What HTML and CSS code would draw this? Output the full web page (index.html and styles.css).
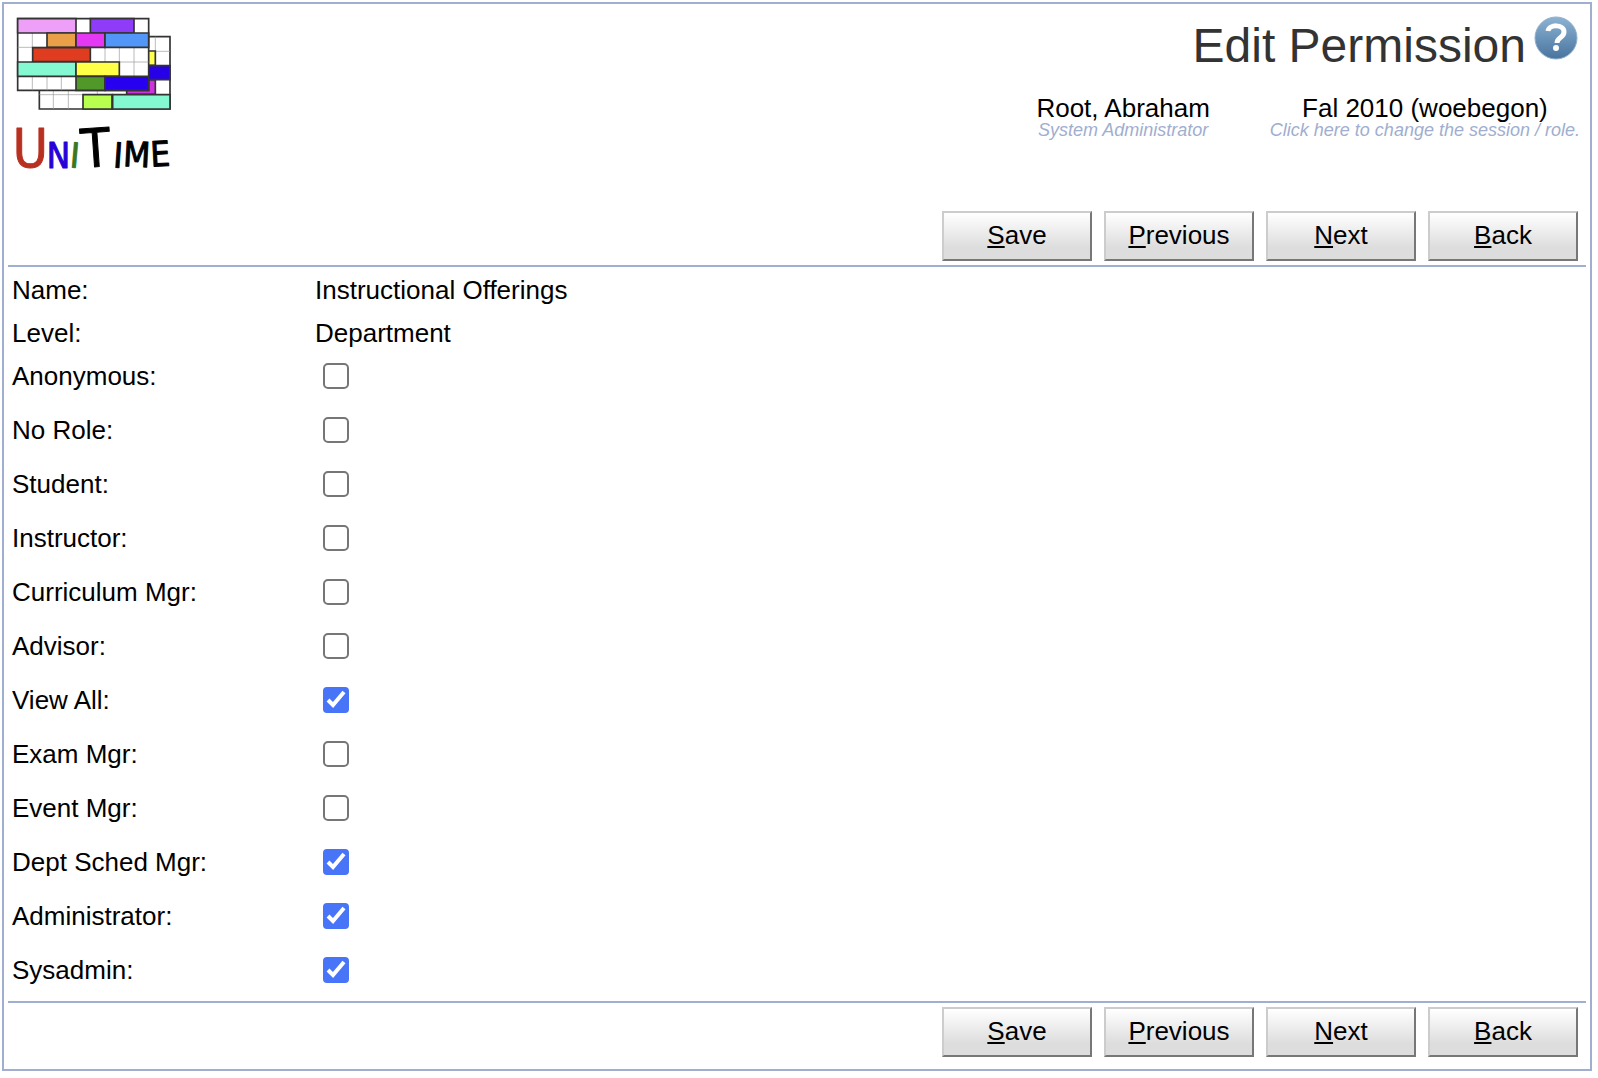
FILE: index.html
```html
<!DOCTYPE html>
<html lang="en">
<head>
<meta charset="utf-8">
<title>Edit Permission</title>
<link rel="stylesheet" href="styles.css">
</head>
<body>
<form class="page">
  <header class="header">
    <a class="logo" href="#" aria-label="UniTime">
      <svg class="logo-image" viewBox="45 45 474 474">
        <g stroke="#333" stroke-width="5">
          <path fill="#fff" d="M118 110H510V327H118z"/>
          <path fill="none" stroke="#999" stroke-width="2" d="M160 272v55M205 272v55M466 110v175M447 154h63M118 284h392M292 272v12"/>
          <path fill="#ffff50" d="M440 153h26v43h-26z"/>
          <path fill="#2800e8" d="M440 197h70v42h-70z"/>
          <path fill="#d030e0" d="M380 240h86v43h-86z"/>
          <path fill="#b8ff50" d="M249 284h87v43h-87z"/>
          <path fill="#84f8d0" d="M338 284h172v43H338z"/>
          <path fill="#fff" d="M53 56h393v215H53z"/>
          <path fill="none" stroke="#999" stroke-width="2" d="M97 99v44M53 142h393M315 142v87M358 142v87M402 142v87M271 186h175M97 229v42M141 229v42M184 229v42"/>
          <path fill="#eea0f8" d="M53 56h175v43H53z"/>
          <path fill="#8e3cf8" d="M271 56h131v43H271z"/>
          <path fill="#eaa048" d="M141 99h87v43h-87z"/>
          <path fill="#e438f4" d="M228 99h87v43h-87z"/>
          <path fill="#5296f8" d="M315 99h131v43H315z"/>
          <path fill="#e03c20" d="M98 143h173v42H98z"/>
          <path fill="#84f8d0" d="M53 186h175v43H53z"/>
          <path fill="#ffff48" d="M228 186h130v43H228z"/>
          <path fill="#509828" d="M228 229h87v42h-87z"/>
          <path fill="#2800f0" d="M315 229h131v42H315z"/>
        </g>
        <text class="logo-text"><tspan class="logo-large red" x="38" y="501">U</tspan><tspan class="logo-small blue" x="140" y="504">N</tspan><tspan class="logo-small green" x="208" y="502" rotate="5">I</tspan><tspan class="logo-large" x="247" y="503" rotate="-4">T</tspan><tspan class="logo-small" x="338" y="502" rotate="4">I</tspan><tspan class="logo-small" x="368" y="498" rotate="3">M</tspan><tspan class="logo-small" x="453" y="500" rotate="-3">E</tspan></text>
      </svg>
    </a>
    <div class="heading">
      <div class="title-row">
        <h1 class="title">Edit Permission</h1>
        <a class="help" href="#" aria-label="Help">
          <svg class="help-image" viewBox="0 0 44 44">
            <defs><linearGradient id="help-fill" x2="0" y2="1"><stop offset="0" stop-color="#8db3d2"/><stop offset="1" stop-color="#48749f"/></linearGradient></defs>
            <circle cx="22" cy="22" r="21" fill="url(#help-fill)" stroke="#8fb0cc"/>
            <path d="M14 15c1-7 16-7 16 1 0 6-7 5-7 11" fill="none" stroke="#fff" stroke-width="5"/>
            <circle cx="22" cy="32" r="3" fill="#fff"/>
          </svg>
        </a>
      </div>
      <div class="account">
        <div class="account-item"><span>Root, Abraham</span><a class="hint" href="#">System Administrator</a></div>
        <div class="account-item"><span>Fal 2010 (woebegon)</span><a class="hint" href="#">Click here to change the session / role.</a></div>
      </div>
    </div>
  </header>
  <div class="buttons">
    <button class="button" type="button"><u>S</u>ave</button>
    <button class="button" type="button"><u>P</u>revious</button>
    <button class="button" type="button"><u>N</u>ext</button>
    <button class="button" type="button"><u>B</u>ack</button>
  </div>
  <main class="fields">
    <div class="row"><span>Name:</span><span>Instructional Offerings</span></div>
    <div class="row"><span>Level:</span><span>Department</span></div>
    <div class="row role"><label for="anonymous">Anonymous:</label><input class="check" type="checkbox" id="anonymous"></div>
    <div class="row role"><label for="no-role">No Role:</label><input class="check" type="checkbox" id="no-role"></div>
    <div class="row role"><label for="student">Student:</label><input class="check" type="checkbox" id="student"></div>
    <div class="row role"><label for="instructor">Instructor:</label><input class="check" type="checkbox" id="instructor"></div>
    <div class="row role"><label for="curriculum">Curriculum Mgr:</label><input class="check" type="checkbox" id="curriculum"></div>
    <div class="row role"><label for="advisor">Advisor:</label><input class="check" type="checkbox" id="advisor"></div>
    <div class="row role"><label for="view-all">View All:</label><input class="check" type="checkbox" id="view-all" checked></div>
    <div class="row role"><label for="exam">Exam Mgr:</label><input class="check" type="checkbox" id="exam"></div>
    <div class="row role"><label for="event">Event Mgr:</label><input class="check" type="checkbox" id="event"></div>
    <div class="row role"><label for="dept">Dept Sched Mgr:</label><input class="check" type="checkbox" id="dept" checked></div>
    <div class="row role"><label for="administrator">Administrator:</label><input class="check" type="checkbox" id="administrator" checked></div>
    <div class="row role"><label for="sysadmin">Sysadmin:</label><input class="check" type="checkbox" id="sysadmin" checked></div>
  </main>
  <div class="buttons">
    <button class="button" type="button"><u>S</u>ave</button>
    <button class="button" type="button"><u>P</u>revious</button>
    <button class="button" type="button"><u>N</u>ext</button>
    <button class="button" type="button"><u>B</u>ack</button>
  </div>
</form>
</body>
</html>
```

FILE: styles.css
```css
* {
  box-sizing: border-box;
}

body {
  margin: 2px 6px 6px 2px;
  background: #fff;
  color: #000;
  font: 26px/30px "Liberation Sans", Arial, sans-serif;
}

.page {
  border: 2px solid #a0aecf;
  padding: 11px 4px 8px;
}

.header {
  display: flex;
  justify-content: space-between;
  min-height: 192px;
  padding: 0 6px 0 7px;
}

.logo-image {
  display: block;
  width: 158px;
  height: 158px;
  overflow: visible;
}

.logo-text {
  font-family: "DejaVu Sans Condensed", "DejaVu Sans", sans-serif;
  fill: #000;
  stroke: #000;
  stroke-width: 3px;
  stroke-linejoin: round;
}

.logo-large {
  font-size: 160px;
}

.logo-small {
  font-size: 104px;
}

.red {
  fill: #b83020;
  stroke: #b83020;
}

.blue {
  fill: #2800d8;
  stroke: #2800d8;
}

.green {
  fill: #387820;
  stroke: #387820;
}

.heading {
  display: flex;
  flex-direction: column;
  align-items: flex-end;
  gap: 17px;
}

.title-row {
  display: flex;
  gap: 8px;
  padding-right: 2px;
}

.title {
  margin: 0;
  color: #333;
  font-size: 48px;
  font-weight: normal;
  line-height: 61px;
}

.help-image {
  display: block;
  width: 44px;
  height: 44px;
  margin-top: 1px;
}

.account {
  display: flex;
  gap: 60px;
}

.account-item {
  display: flex;
  flex-direction: column;
  align-items: center;
}

.hint {
  color: #a0aecf;
  font-size: 18px;
  font-style: italic;
  line-height: 14px;
  text-decoration: none;
}

.buttons {
  display: flex;
  justify-content: flex-end;
  gap: 12px;
  padding: 4px 8px;
}

.button {
  width: 150px;
  height: 50px;
  padding: 0 0 2px;
  border: 2px solid;
  border-color: #ccc #777 #777 #ccc;
  background: linear-gradient(#fff, #ddd 75%);
  color: #000;
  font: inherit;
}

.fields {
  border: solid #a0aecf;
  border-width: 2px 0;
  padding: 8px 4px 0;
}

.row {
  display: grid;
  grid-template-columns: 303px 1fr;
  align-items: center;
  padding-bottom: 13px;
}

.role {
  padding-bottom: 24px;
}

.role:last-child {
  padding-bottom: 16px;
}

.check {
  appearance: none;
  width: 26px;
  height: 26px;
  margin: 0 8px;
  border: 2px solid #767676;
  border-radius: 5px;
  background: #fff;
}

.check:checked {
  border: 0;
  border-radius: 4px;
  background: #4874f8 url("data:image/svg+xml,%3Csvg xmlns='http://www.w3.org/2000/svg' viewBox='0 0 26 26'%3E%3Cpath d='M5 13l5 5L21 5' fill='none' stroke='white' stroke-width='4'/%3E%3C/svg%3E");
}
```
